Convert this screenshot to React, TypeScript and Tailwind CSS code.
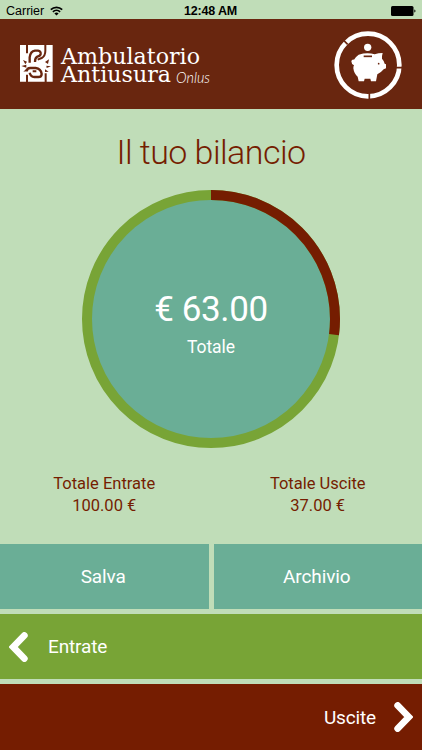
import React from 'react';

const totals = { income: 100, expenses: 37 };

function StatusBar() {
  return (
    <div className="relative flex h-[19px] shrink-0 items-center justify-between bg-[#c0ddb8] pl-[6px] pr-[6px] font-['Liberation_Sans'] text-[12.5px] text-black">
      <div className="flex items-center gap-[6px] pt-[3px]">
        <span>Carrier</span>
        <svg width="13" height="10" viewBox="0 0 13 10" fill="none" stroke="#000" strokeWidth="1.7">
          <path d="M0.8 3.6a8.2 8.2 0 0 1 11.4 0" />
          <path d="M2.9 5.9a5.2 5.2 0 0 1 7.2 0" />
          <path d="M6.5 9.6L4.4 7.5a3 3 0 0 1 4.2 0z" fill="#000" stroke="none" />
        </svg>
      </div>
      <span className="absolute left-[184px] top-[2px] whitespace-nowrap font-bold tracking-[-0.18px]">12:48 AM</span>
      <svg className="mt-[3px]" width="25" height="10" viewBox="0 0 25 10">
        <rect x="0" y="0" width="22.5" height="10" rx="1.5" />
        <path d="M23.3 3.4c1.6 0.4 1.6 2.8 0 3.2z" />
      </svg>
    </div>
  );
}

function Logo() {
  return (
    <svg width="196" height="48" viewBox="0 0 196 48" fill="#fff" role="img">
      <g transform="translate(-5 -6) scale(0.33333)">
        <path d="M15 21H113V131H15z" />
        <g fill="none" stroke="#69260f" strokeWidth="7">
          <path d="M36 20v26M91 20v18Q91 54 80 60L68 65" strokeWidth="6" />
          <path d="M44 74V58Q46 40 60 38H69Q78 39 77 48Q76 54 67 56Q60 59 60 72" />
          <path d="M35 100Q36 90 46 90H62Q78 92 80 108Q80 117 70 117H58Q47 116 44 104" />
          <path d="M53 100H64M36 110v22M92 106v26" strokeWidth="6" />
        </g>
        <g fill="#69260f">
          <path d="M24 66l12 5-5 8zM19 84l15-4v9zM25 101l9-9 4 7zM90 72l12-8-3 14zM94 83l14 2-13 5zM90 94l11 7-11 1z" />
        </g>
      </g>
      <g fontFamily="'DejaVu Serif', serif" fontSize="21.5">
        <text x="41" y="20" textLength="139" lengthAdjust="spacingAndGlyphs">Ambulatorio</text>
        <text x="41" y="38" textLength="110" lengthAdjust="spacingAndGlyphs">Antiusura</text>
      </g>
      <text x="156" y="38.5" fontFamily="Lato, sans-serif" fontSize="15" fontStyle="italic" fontWeight="300" textLength="34" lengthAdjust="spacingAndGlyphs">
        Onlus
      </text>
    </svg>
  );
}

function PiggyBadge() {
  return (
    <svg width="68" height="68" viewBox="0 0 204 204">
      <circle cx="102" cy="102" r="94" fill="none" stroke="#fff" strokeWidth="14" />
      <path d="M26 25l15 15M186 110h18M106 186v18" stroke="#69260f" strokeWidth="5" />
      <circle cx="101" cy="49" r="11" fill="#fff" />
      <path
        fill="#fff"
        d="M74 71Q100 63 122 70Q133 66 146 66Q143 76 144 83Q150 89 152 98L156 100V112L149 115Q142 124 130 130L126 151H111L109 143H92L90 151H74L71 137Q60 128 58 112Q58 106 60 103Q52 99 52 91Q53 85 60 86Q64 78 74 71z"
      />
      <path d="M89 76h25" stroke="#69260f" strokeWidth="5" />
      <circle cx="134" cy="98" r="2.5" fill="#69260f" />
    </svg>
  );
}

function BalanceChart() {
  const length = 2 * Math.PI * 124;
  const share = totals.expenses / (totals.income + totals.expenses);

  return (
    <div className="relative mx-auto size-[258px]">
      <svg width="258" height="258" viewBox="0 0 258 258">
        <circle cx="129" cy="129" r="124" fill="#6aae96" stroke="#78a436" strokeWidth="10" />
        <circle
          cx="129"
          cy="129"
          r="124"
          fill="none"
          stroke="#751d01"
          strokeWidth="10"
          strokeDasharray={`${length * share} ${length}`}
          transform="rotate(-90 129 129)"
        />
      </svg>
      <div className="absolute inset-0 flex flex-col items-center pt-[99px] text-white">
        <span className="text-[35px] leading-[42px] tracking-[-0.4px]">€ {(totals.income - totals.expenses).toFixed(2)}</span>
        <span className="mt-[5px] text-[17.5px] leading-[22px] tracking-[-0.1px]">Totale</span>
      </div>
    </div>
  );
}

function Total({ label, value }: { label: string; value: number }) {
  return (
    <div className="text-center text-[16.5px] leading-[22px] text-[#751d01]">
      <div>{label}</div>
      <div>{value.toFixed(2)} €</div>
    </div>
  );
}

function Chevron({ flip = false }: { flip?: boolean }) {
  return (
    <svg className={flip ? 'rotate-180' : ''} width="19" height="30" viewBox="0 0 19 30" fill="none">
      <path d="M15.3 3.5L4.2 15l11.1 11.5" stroke="#fff" strokeWidth="6.8" strokeLinecap="round" />
    </svg>
  );
}

export default function App() {
  return (
    <div className="flex h-[750px] w-[422px] flex-col overflow-hidden bg-[#c0ddb8] font-[Roboto,sans-serif]">
      <StatusBar />
      <header className="flex h-[89.5px] shrink-0 justify-between bg-[#69260f] pl-[20px] pr-[20px]">
        <div className="pt-[25px]">
          <Logo />
        </div>
        <div className="pt-[11.5px]">
          <PiggyBadge />
        </div>
      </header>

      <main className="flex flex-1 flex-col">
        <h1 className="mt-[22.5px] text-center text-[34px] font-light leading-[42px] tracking-[-0.55px] text-[#751d01]">
          Il tuo bilancio
        </h1>
        <div className="mt-[17px]">
          <BalanceChart />
        </div>
        <div className="mt-[25px] grid grid-cols-2 gap-x-[5px]">
          <Total label="Totale Entrate" value={totals.income} />
          <Total label="Totale Uscite" value={totals.expenses} />
        </div>
      </main>

      <div className="grid h-[65px] shrink-0 grid-cols-2 gap-[5px] text-[19px] tracking-[-0.1px] text-white">
        <button className="bg-[#6aae96] pr-[2px] pt-[2px]">Salva</button>
        <button className="bg-[#6aae96] pr-[2px] pt-[2px]">Archivio</button>
      </div>
      <button className="mt-[5px] flex h-[65px] shrink-0 items-center gap-[20px] bg-[#78a436] pl-[9px] text-[19px] tracking-[-0.15px] text-white">
        <Chevron />
        <span className="pt-[2px]">Entrate</span>
      </button>
      <button className="mt-[5px] flex h-[66px] shrink-0 items-center justify-end gap-[18px] bg-[#751d01] pr-[9px] text-[19px] tracking-[-0.15px] text-white">
        <span className="pt-[2px]">Uscite</span>
        <Chevron flip />
      </button>
    </div>
  );
}
